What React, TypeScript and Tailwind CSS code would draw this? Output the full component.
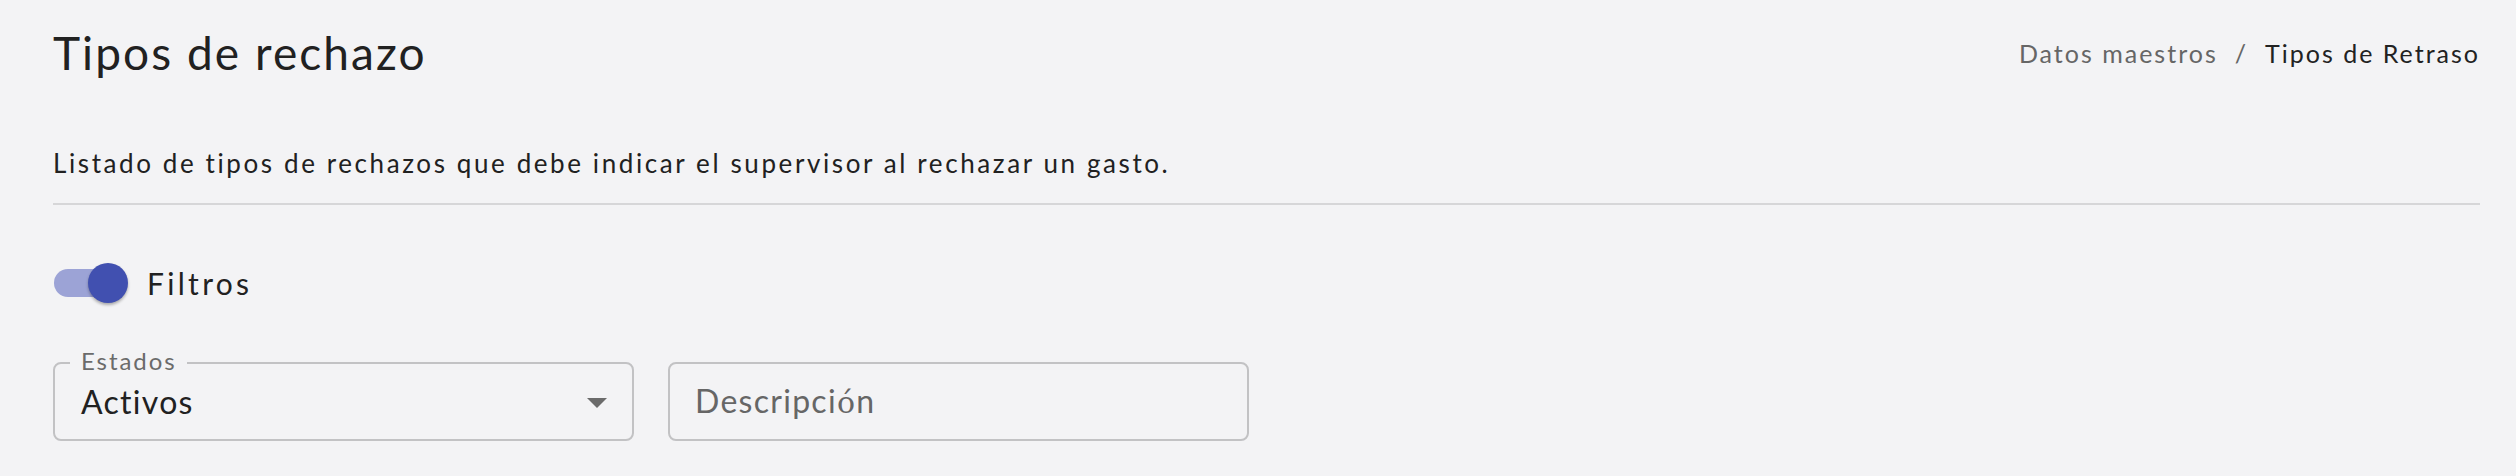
import React from "react";

function Toggle() {
  return (
    <div className="relative w-[74px] h-[40px] ml-[1px]">
      <div className="absolute left-0 top-[6px] w-[68px] h-[28px] rounded-full bg-[#9ca3d6]" />
      <div className="absolute left-[34px] top-0 w-[40px] h-[40px] rounded-full bg-[#4150b0] shadow-[0_2px_3px_rgba(0,0,0,0.3)]" />
    </div>
  );
}

export default function App() {
  return (
    <div className="min-h-[476px] bg-[#f3f3f5] pl-[53px] pr-[36px] pt-[25px] text-[#212121] font-['Lato',sans-serif]">
      <div className="flex justify-between items-start">
        <h1 className="text-[46px] leading-[56px] font-normal tracking-[0.045em]">Tipos de rechazo</h1>
        <nav className="mt-[13px] flex items-center text-[25px] leading-[30px] tracking-[0.08em]">
          <span className="text-[#666666]">Datos maestros</span>
          <span className="mx-[17px] text-[#666666]">/</span>
          <span className="text-[#222222]">Tipos de Retraso</span>
        </nav>
      </div>

      <p className="mt-[66px] text-[26px] leading-[32px] tracking-[0.1em]">
        Listado de tipos de rechazos que debe indicar el supervisor al rechazar un gasto.
      </p>
      <div className="mt-[24px] h-[2px] bg-[#d6d6d8]" />

      <div className="mt-[58px] flex items-center gap-[19px]">
        <Toggle />
        <span className="text-[30px] leading-[40px] tracking-[0.11em]">Filtros</span>
      </div>

      <div className="mt-[59px] flex gap-[34px]">
        <div className="relative w-[581px] h-[79px] border-2 border-[#c2c2c4] rounded-[8px] flex items-center justify-between pl-[26px] pr-[11px]">
          <span className="absolute left-[15px] top-[-15px] px-[11px] bg-[#f3f3f5] text-[24px] leading-[24px] tracking-[0.08em] text-[#6b6b6b]">
            Estados
          </span>
          <span className="text-[32px] leading-[40px] tracking-[0.04em]">Activos</span>
          <svg width="48" height="48" viewBox="0 0 24 24" className="shrink-0">
            <path d="M7 10l5 5 5-5z" fill="#6b6b6b" />
          </svg>
        </div>
        <div className="w-[581px] h-[79px] border-2 border-[#c2c2c4] rounded-[8px] flex items-center pl-[25px]">
          <span className="text-[32px] leading-[40px] tracking-[0.04em] text-[#666666]">
            Descripci<span style={{ fontFamily: "'DejaVu Serif', serif" }} className="text-[30px]">ó</span>n
          </span>
        </div>
      </div>
    </div>
  );
}
